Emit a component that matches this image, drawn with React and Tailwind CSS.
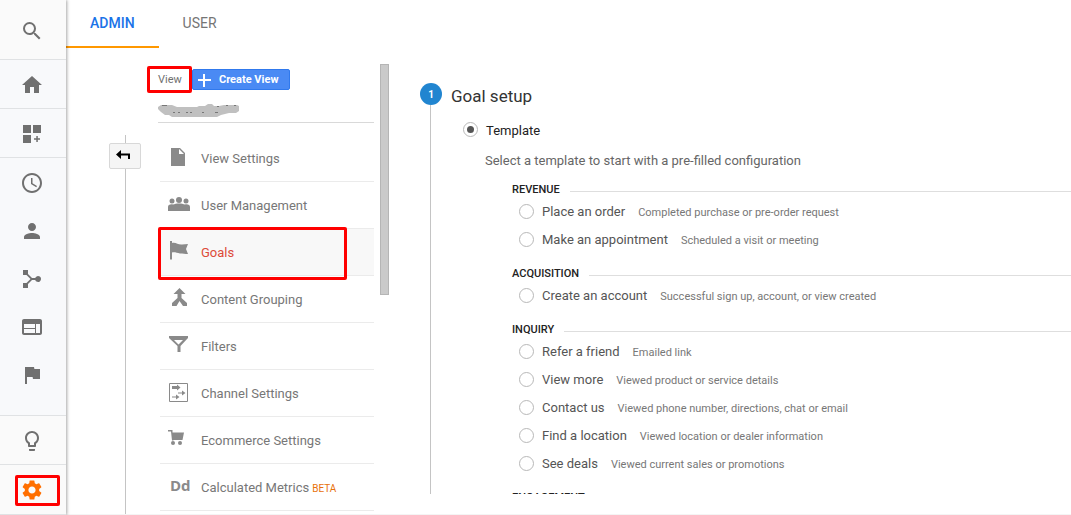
import { useState } from "react";
import {
  MdSearch,
  MdHome,
  MdAccessTime,
  MdPerson,
  MdWeb,
  MdFlag,
  MdLightbulbOutline,
  MdSettings,
} from "react-icons/md";

const CustomizeIcon = () => (
  <svg width="24" height="24" viewBox="0 0 24 24" fill="currentColor">
    <path d="M3 3h8v8H3zM13 3h8v8h-8zM3 13h8v8H3zM16.300 14h1.500v2.300H20v1.500h-2.200V20h-1.500v-2.200H14v-1.500h2.300z" />
  </svg>
);

const AttributionIcon = () => (
  <svg width="24" height="24" viewBox="0 0 24 24" fill="currentColor">
    <path d="M3 3h5v4l4 4h3.200a3 3 0 1 1 0 2H12l-4 4v4H3v-5h3.500L10.500 12 6.500 8H3z" />
  </svg>
);

const FileIcon = () => (
  <svg width="22" height="22" viewBox="0 0 22 22" fill="currentColor">
    <path fillRule="evenodd" d="M3 2h9l5 5v13H3zM11 3v5h5z" />
  </svg>
);

const UsersIcon = () => (
  <svg width="22" height="22" viewBox="0 0 22 22" fill="currentColor">
    <circle cx="4" cy="8" r="2.500" />
    <circle cx="11" cy="7" r="3" />
    <circle cx="18" cy="8" r="2.500" />
    <path d="M0 18v-4c0-2 2-3 5-2.500 3-1.500 9-1.500 12 0 3-.500 5 .500 5 2.500v4z" />
  </svg>
);

const GoalIcon = () => (
  <svg width="22" height="22" viewBox="0 0 22 22" fill="currentColor">
    <path d="M2 1h2v2c4-1 6 2 10 1.500 2 0 4-.500 6-.500l-2 5 2 5c-3 0-5-.500-8-.500-3-.500-5-1.500-8-1v7H2z" />
  </svg>
);

const MergeIcon = () => (
  <svg width="22" height="22" viewBox="0 0 22 22" fill="currentColor">
    <path d="M11.500 1l6 6h-4v4l5.500 5v3h-4l-3.500-5-3 5H4v-3l5.500-5V7h-4z" />
  </svg>
);

const FilterIcon = () => (
  <svg width="22" height="22" viewBox="0 0 22 22" fill="currentColor">
    <path fillRule="evenodd" d="M1 2h19v2l-7.500 8v6h-3v-6L1 4zM6 6l4.500 4.500L15 6z" />
  </svg>
);

const ChannelIcon = () => (
  <svg width="22" height="22" viewBox="0 0 22 22" fill="currentColor">
    <path d="M1.500 2.500h18v18h-18z" fill="none" stroke="currentColor" />
    <path d="M4 5h5V3.500l3.500 3-3.500 3V8H4zM10 11.500h4v-2l3.500 2.500-3.500 2.500v-2h-4zM4 15.500h4v-2l3.500 2.500L8 18.500v-2H4z" />
  </svg>
);

const CartIcon = () => (
  <svg width="22" height="22" viewBox="0 0 22 22" fill="currentColor">
    <path d="M0 2h4.500v2.500H16L14.500 12H5.500v.500H4L3 3.500H0z" />
    <circle cx="5" cy="15" r="2" />
    <circle cx="12" cy="15" r="2" />
  </svg>
);

const MetricsIcon = () => (
  <span className="block pb-0.5 pl-0.5 font-['Open_Sans',sans-serif] text-[15px] leading-5 font-bold">Dd</span>
);

const menu = [
  { label: "View Settings", Icon: FileIcon },
  { label: "User Management", Icon: UsersIcon },
  { label: "Goals", Icon: GoalIcon },
  { label: "Content Grouping", Icon: MergeIcon },
  { label: "Filters", Icon: FilterIcon },
  { label: "Channel Settings", Icon: ChannelIcon },
  { label: "Ecommerce Settings", Icon: CartIcon },
  { label: "Calculated Metrics", Icon: MetricsIcon, beta: true },
];

const groups = [
  {
    title: "REVENUE",
    options: [
      ["Place an order", "Completed purchase or pre-order request"],
      ["Make an appointment", "Scheduled a visit or meeting"],
    ],
  },
  {
    title: "ACQUISITION",
    options: [["Create an account", "Successful sign up, account, or view created"]],
  },
  {
    title: "INQUIRY",
    options: [
      ["Refer a friend", "Emailed link"],
      ["View more", "Viewed product or service details"],
      ["Contact us", "Viewed phone number, directions, chat or email"],
      ["Find a location", "Viewed location or dealer information"],
      ["See deals", "Viewed current sales or promotions"],
    ],
  },
  { title: "ENGAGEMENT", options: [] },
];

const reports = [
  ["Real-time", MdAccessTime],
  ["Audience", MdPerson],
  ["Acquisition", AttributionIcon],
  ["Behavior", MdWeb],
  ["Conversions", MdFlag],
];

function NavButton({ label, className = "", children }) {
  return (
    <button
      aria-label={label}
      className={`flex w-full shrink-0 items-center justify-center border-[#e0e2e4] pr-0.5 ${className}`}
    >
      {children}
    </button>
  );
}

function Sidebar() {
  return (
    <nav className="z-10 flex w-[66px] shrink-0 flex-col bg-[#f8f9fb] text-[#707070] shadow-[1px_0_3px_rgba(0,0,0,0.35)]">
      <NavButton label="Search" className="h-15 border-b bg-[#fafafa] pt-0.5">
        <MdSearch size={24} />
      </NavButton>
      <NavButton label="Home" className="h-[49px] border-b pt-0.5">
        <MdHome size={24} />
      </NavButton>
      <NavButton label="Customization" className="h-[49px] border-b pt-0.5">
        <CustomizeIcon />
      </NavButton>
      <div className="flex-1 pt-px">
        {reports.map(([label, Icon]) => (
          <NavButton key={label} label={label} className="h-12">
            <Icon size={24} />
          </NavButton>
        ))}
      </div>
      <NavButton label="Discover" className="h-[49px] border-t bg-[#fafafa] pt-0.5">
        <MdLightbulbOutline size={24} />
      </NavButton>
      <NavButton label="Admin" className="relative h-[51px] border-y bg-[#fafafa] text-[#ff6f00]">
        <MdSettings size={24} />
        <span className="absolute top-2.5 left-[15px] h-[31px] w-[45px] rounded-xs border-3 border-[#f00]" />
      </NavButton>
    </nav>
  );
}

function ViewMenu() {
  const [active, setActive] = useState("Goals");

  return (
    <section className="-ml-3 box-content w-[216px] shrink-0 overflow-hidden pl-3">
      <div className="mt-[21px] flex h-[21px] items-center">
        <span className="relative w-[34px] pt-0.5 text-[11px] text-[#707070]">
          View
          <span className="absolute -top-1 right-0 -bottom-1 -left-[11px] rounded-xs border-3 border-[#f00]" />
        </span>
        <button className="flex h-[21px] w-[98px] items-center gap-2 rounded-xs border border-[#3079ed] bg-[#4a8af4] pt-0.5 pl-[5px] text-[11px] font-bold text-white">
          <svg width="13" height="13" viewBox="0 0 13 13" stroke="currentColor" strokeWidth="2">
            <path d="M0 6h13M6 0v13" />
          </svg>
          Create View
        </button>
      </div>
      <div className="flex h-[33px] border-b border-[#d9d9d9] pt-3.5">
        <svg width="82" height="14" viewBox="0 0 82 14" fill="#c0c0c0">
          <path d="M0 3l3-2h11l5 2h20l2-1h6l3-2 4 0 2 2h5l5-1h13l2 1v5l-3 2-7 0-8 2-4 2H14l-3-2H7L3 8 0 5z" />
          <path d="M4 1.500h5M59 2.500h2M68 1.500h2M76 1.500h2M15 8.500h2M20 8.500h2M28 8.500h2M32 8.500h2M44 8.500h2M57 8.500h3" stroke="#777" strokeWidth="1" />
        </svg>
      </div>
      <ul className="ml-0.5 pt-3">
        {menu.map(({ label, Icon, beta }) => (
          <li
            key={label}
            className={`relative h-[47px] border-b border-[#ebebeb] ${active === label ? "bg-[#f8f8f8]" : ""}`}
          >
            <button
              onClick={() => setActive(label)}
              className="flex h-full w-full items-center pt-0.5 pl-2 text-left text-[13px]"
            >
              <span className="w-[33px] pb-1 text-[#8a8a8a]">
                <Icon />
              </span>
              <span className={active === label ? "text-[#dd4b39]" : "text-[#777]"}>
                {label}
                {beta && <small className="ml-[3px] text-[10px] text-[#e8710a]">BETA</small>}
              </span>
            </button>
            {active === label && (
              <span className="pointer-events-none absolute -top-0.5 -left-0.5 h-[53px] w-[189px] rounded-xs border-3 border-[#f00]" />
            )}
          </li>
        ))}
      </ul>
    </section>
  );
}

function Radio(props) {
  return (
    <input
      type="radio"
      className="grid size-[15px] shrink-0 appearance-none place-items-center rounded-full border border-[#b8b8b8] bg-white before:size-[7px] before:rounded-full checked:before:bg-[#555]"
      {...props}
    />
  );
}

function GoalSetup() {
  return (
    <section className="mb-5 ml-[31px] flex min-w-0 flex-1 overflow-hidden pt-[35px]">
      <div className="flex w-[22px] shrink-0 flex-col">
        <span className="flex size-[22px] shrink-0 items-center justify-center rounded-full bg-[#2185d0] text-[10px] font-bold text-white">
          1
        </span>
        <span className="ml-2.5 w-px flex-1 bg-[#c4c4c4]" />
      </div>
      <div className="min-w-0 flex-1 pl-[9px]">
        <h1 className="mt-[3px] text-[17px] leading-5 text-[#333]">Goal setup</h1>
        <label className="mt-3.5 ml-3 flex h-5 items-start gap-2 pt-0.5 text-[13px] leading-[18px] text-[#222]">
          <Radio name="setup" defaultChecked />
          Template
        </label>
        <p className="mt-[11px] ml-[34px] text-[13px] leading-5 text-[#666]">
          Select a template to start with a pre-filled configuration
        </p>
        <div className="ml-[61px] pt-2.5">
          {groups.map((group) => (
            <fieldset key={group.title} className="mb-2.5">
              <legend className="flex h-[18px] w-full items-center gap-2.5 text-[11px] font-medium text-[#222]">
                {group.title}
                <span className="mt-0.5 h-px flex-1 bg-[#dedede]" />
              </legend>
              {group.options.map(([name, hint]) => (
                <label key={name} className="ml-[7px] flex h-7 items-start pt-[5px] text-[13px] leading-4 text-[#555]">
                  <Radio name="template" />
                  <span className="ml-2">{name}</span>
                  <span className="ml-[13px] pt-px text-[11px] text-[#777]">{hint}</span>
                </label>
              ))}
            </fieldset>
          ))}
        </div>
      </div>
    </section>
  );
}

export default function App() {
  return (
    <div className="flex h-screen overflow-hidden bg-white font-[Roboto,sans-serif]">
      <Sidebar />
      <main className="flex min-w-0 flex-1 flex-col">
        <header className="flex h-12 shrink-0 text-[14px]">
          <button className="border-b-2 border-[#ff9800] px-6 font-medium text-[#1a73e8]">ADMIN</button>
          <button className="border-b-2 border-transparent px-6 text-[#757575]">USER</button>
        </header>
        <div className="flex min-h-0 flex-1 border-b border-[#f4f4f4]">
          <div className="mt-[87px] mr-[17px] ml-[43px] flex w-8 shrink-0 flex-col items-center">
            <span className="h-2 w-px bg-[#c4c4c4]" />
            <button
              aria-label="Back"
              className="flex h-[26px] w-8 shrink-0 items-center justify-center rounded-xs border border-[#d8d8d8] bg-[#f5f5f5] pr-1 pb-0.5 text-black"
            >
              <svg width="14" height="10" viewBox="0 0 14 10" fill="currentColor">
                <path d="M0 4.500L5 0v3.500h9V9h-2V5.500H5V9z" />
              </svg>
            </button>
            <span className="w-px flex-1 bg-[#c4c4c4]" />
          </div>
          <ViewMenu />
          <div className="mt-4 ml-1.5 h-[231px] w-[9px] shrink-0 border border-[#b5b5b5] bg-[#cacaca]" />
          <GoalSetup />
        </div>
      </main>
    </div>
  );
}
